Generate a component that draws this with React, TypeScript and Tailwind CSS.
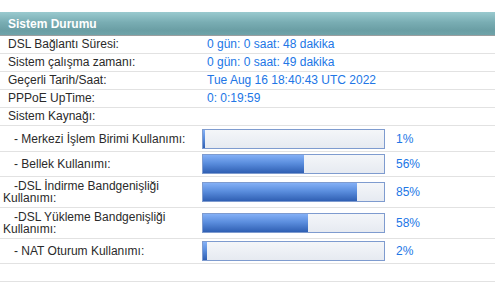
import React from "react";

const font = { fontFamily: '"Liberation Sans", Arial, sans-serif' };

function Bar({ pct }: { pct: number }) {
  return (
    <div className="h-[20px] w-[183px] border border-[#7e9bcf] bg-[linear-gradient(to_bottom,#f4f6f9,#e6eaf1)]">
      <div
        className="h-full bg-[linear-gradient(to_bottom,#84b0f6,#5b8ede_45%,#2f5fb3)]"
        style={{ width: `${pct}%` }}
      />
    </div>
  );
}

const infoRows = [
  ["DSL Bağlantı Süresi:", "0 gün: 0 saat: 48 dakika"],
  ["Sistem çalışma zamanı:", "0 gün: 0 saat: 49 dakika"],
  ["Geçerli Tarih/Saat:", "Tue Aug 16 18:40:43 UTC 2022"],
  ["PPPoE UpTime:", "0: 0:19:59"],
  ["Sistem Kaynağı:", ""],
];

const barRows: { label: string; pct: number; h: string; two?: boolean }[] = [
  { label: "- Merkezi İşlem Birimi Kullanımı:", pct: 1, h: "h-[26px]" },
  { label: "- Bellek Kullanımı:", pct: 56, h: "h-[25px]" },
  { label: "-DSL İndirme Bandgenişliği Kullanımı:", pct: 85, h: "h-[31px]", two: true },
  { label: "-DSL Yükleme Bandgenişliği Kullanımı:", pct: 58, h: "h-[31px]", two: true },
  { label: "- NAT Oturum Kullanımı:", pct: 2, h: "h-[25px]" },
];

export default function App() {
  return (
    <div className="w-[495px] h-[282px] bg-white pt-[12px] text-[12px] text-[#2a2a2a]" style={font}>
      <div className="h-[24px] border-b border-[#9a9e9f] bg-[linear-gradient(to_bottom,#9acacf,#79adb3_45%,#6a9ea4_80%,#6fa3a9)] flex items-center pl-[8px]">
        <span className="font-bold text-white">Sistem Durumu</span>
      </div>
      {infoRows.map(([l, v]) => (
        <div key={l} className="h-[18px] border-b border-[#e2e2e2] flex items-center">
          <div className="w-[207px] pl-[8px] leading-[17px]">{l}</div>
          <div className="text-[#2176e6] leading-[17px]">{v}</div>
        </div>
      ))}
      {barRows.map((r) => (
        <div key={r.label} className={`${r.h} border-b border-[#e2e2e2] flex items-center`}>
          <div className="w-[202px] pl-[3px] pr-[8px] leading-[12px] indent-[11px]">{r.label}</div>
          <Bar pct={r.pct} />
          <div className="pl-[11px] text-[#2176e6] leading-[12px]">{r.pct}%</div>
        </div>
      ))}
      <div className="h-[18px] border-b border-[#e2e2e2]" />
    </div>
  );
}
